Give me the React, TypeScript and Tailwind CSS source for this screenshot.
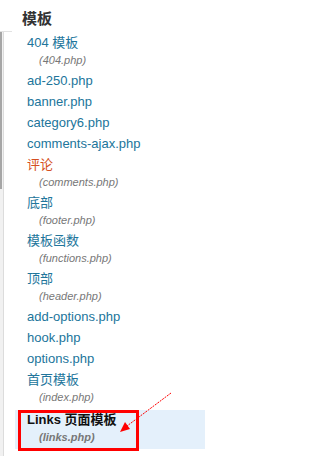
import React from "react";

type Item = { title: string; file?: string; tone?: "link" | "hot" | "current" };

const items: Item[] = [
  { title: "404 模板", file: "(404.php)" },
  { title: "ad-250.php" },
  { title: "banner.php" },
  { title: "category6.php" },
  { title: "comments-ajax.php" },
  { title: "评论", file: "(comments.php)", tone: "hot" },
  { title: "底部", file: "(footer.php)" },
  { title: "模板函数", file: "(functions.php)" },
  { title: "顶部", file: "(header.php)" },
  { title: "add-options.php" },
  { title: "hook.php" },
  { title: "options.php" },
  { title: "首页模板", file: "(index.php)" },
  { title: "Links 页面模板", file: "(links.php)", tone: "current" },
];

function TemplateRow({ item }: { item: Item }) {
  const current = item.tone === "current";
  return (
    <li className={current ? "mt-[3px] pt-[1px] pb-[3px] bg-[#e4f0fb]" : "pt-[2px] pb-[1px]"}>
      <div
        className={`pl-[12px] text-[13px] leading-[18px] whitespace-nowrap ${
          current
            ? "font-bold text-[#111]"
            : item.tone === "hot"
            ? "text-[#d54e21]"
            : "text-[#21759b]"
        }`}
      >
        {item.title}
      </div>
      {item.file && (
        <div
          className={`pl-[24px] text-[11px] leading-[17px] italic text-[#777] ${
            current ? "font-bold" : ""
          }`}
        >
          {item.file}
        </div>
      )}
    </li>
  );
}

export default function App() {
  return (
    <div
      className="relative w-[213px] h-[456px] bg-white overflow-hidden flex"
      style={{ fontFamily: '"Liberation Sans", Arial, "Noto Sans CJK SC", sans-serif' }}
    >
      <div className="w-[12px] mt-[31px] border-t border-[#e2e2e2] flex">
        <div className="w-[4px] bg-[#f1f1f1] border-r border-[#dcdcdc]">
          <div className="w-[2px] h-[157px] bg-[#a6a6a6]" />
        </div>
      </div>

      <div className="flex-1">
        <h3 className="pl-[10px] pt-[10px] h-[32px] text-[15px] leading-[18px] font-bold text-[#333]">
          模板
        </h3>
        <ul className="ml-[3px] w-[190px]">
          {items.map((it) => (
            <TemplateRow key={it.title} item={it} />
          ))}
        </ul>
      </div>

      {/* annotation: red box + arrow */}
      <div className="absolute left-[18px] top-[410px] w-[121px] h-[41px] border-[3px] border-[#ff0000] pointer-events-none" />
      <svg className="absolute left-0 top-0 pointer-events-none" width="213" height="456">
        <line
          x1="171"
          y1="393"
          x2="127"
          y2="426"
          stroke="#ff0000"
          strokeWidth="1"
          strokeDasharray="2 1"
        />
        <polygon points="120,432 130,429 125,422" fill="#ff0000" />
      </svg>
    </div>
  );
}
